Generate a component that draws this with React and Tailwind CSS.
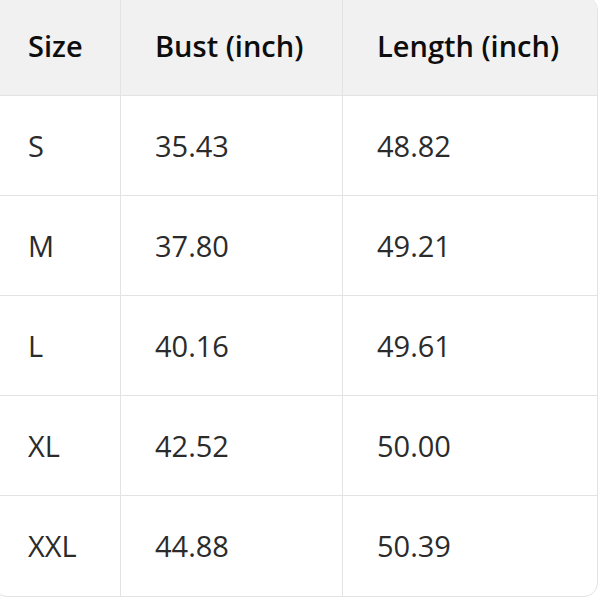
const rows = [
  ["S", "35.43", "48.82"],
  ["M", "37.80", "49.21"],
  ["L", "40.16", "49.61"],
  ["XL", "42.52", "50.00"],
  ["XXL", "44.88", "50.39"],
];

export default function App() {
  return (
    <div className="w-[600px] h-[600px] overflow-hidden bg-white font-['Open_Sans','Noto_Sans',sans-serif]">
      <div className="ml-[-7px] mt-[-4px] w-[605px] rounded-[14px] border border-[#e3e3e3] overflow-hidden">
        <table className="w-full table-fixed border-separate border-spacing-0 text-[29px]">
          <colgroup>
            <col className="w-[127px]" />
            <col className="w-[222px]" />
            <col />
          </colgroup>
          <thead>
            <tr className="bg-[#f1f1f1] h-[99px]">
              <th className="pl-[34px] text-left font-semibold text-[#0d0d0d] border-b border-r border-[#e3e3e3]">Size</th>
              <th className="pl-[34px] text-left font-semibold text-[#0d0d0d] border-b border-r border-[#e3e3e3]">Bust (inch)</th>
              <th className="pl-[34px] text-left font-semibold text-[#0d0d0d] border-b border-[#e3e3e3]">Length (inch)</th>
            </tr>
          </thead>
          <tbody>
            {rows.map((r, i) => {
              const last = i === rows.length - 1;
              return (
                <tr key={r[0]} className="h-[100px]">
                  <td className={`pl-[34px] text-[#2b2b2b] border-r border-[#e3e3e3] ${last ? "" : "border-b"}`}>{r[0]}</td>
                  <td className={`pl-[34px] text-[#2b2b2b] border-r border-[#e3e3e3] ${last ? "" : "border-b"}`}>{r[1]}</td>
                  <td className={`pl-[34px] text-[#2b2b2b] border-[#e3e3e3] ${last ? "" : "border-b"}`}>{r[2]}</td>
                </tr>
              );
            })}
          </tbody>
        </table>
      </div>
    </div>
  );
}
